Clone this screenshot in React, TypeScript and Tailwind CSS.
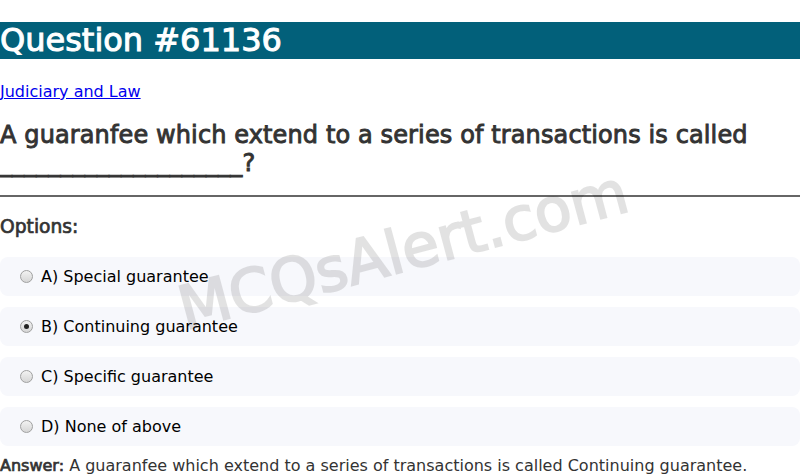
import { useState } from "react";

const options = [
  { key: "A", text: "Special guarantee" },
  { key: "B", text: "Continuing guarantee" },
  { key: "C", text: "Specific guarantee" },
  { key: "D", text: "None of above" },
];

export default function App() {
  const [picked, setPicked] = useState("B");

  return (
    <div className="relative min-h-[476px] overflow-hidden bg-white font-['DejaVu_Sans',sans-serif] text-[#333]">
      <div className="pt-[22px]">
        <h1 className="bg-[#02607a] text-[32px] font-normal leading-[37px] text-white [-webkit-text-stroke:1px_white]">
          Question #61136
        </h1>
      </div>

      <div className="mt-[23px] leading-[19px]">
        <a href="#" className="text-[16px] text-[#0000ee] underline">
          Judiciary and Law
        </a>
      </div>

      <h2 className="mt-[20px] text-[24px] font-normal leading-[28px] tracking-[0.12px] text-[#333] [-webkit-text-stroke:0.9px_#333]">
        A guaranfee which extend to a series of transactions is called ____________________?
      </h2>

      <hr className="mt-[18px] border-t-2 border-[#666]" />

      <h3 className="mt-[19px] text-[18.7px] font-normal leading-[22px] text-[#333] [-webkit-text-stroke:0.7px_#333]">
        Options:
      </h3>

      <div className="mt-[19px] flex flex-col gap-[11px]">
        {options.map((o) => {
          const on = picked === o.key;
          return (
            <label
              key={o.key}
              onClick={() => setPicked(o.key)}
              className="flex h-[39px] cursor-pointer items-center gap-[8px] rounded-lg bg-[#f7f8fc] pl-[20px] text-[16px] text-black"
            >
              <span className="flex h-[13px] w-[13px] items-center justify-center rounded-full border border-[#a0a0a0] bg-gradient-to-b from-[#f2f2f2] to-[#d6d6d6]">
                {on && <span className="h-[5px] w-[5px] rounded-full bg-[#222]" />}
              </span>
              <span>
                {o.key}) {o.text}
              </span>
            </label>
          );
        })}
      </div>

      <p className="mt-[10px] text-[16px] leading-[19px] text-[#333]">
        <span className="[-webkit-text-stroke:0.7px_#333]">Answer:</span> A guaranfee which extend
        to a series of transactions is called Continuing guarantee.
      </p>

      <div className="pointer-events-none absolute left-[403px] top-[250px] -translate-x-1/2 -translate-y-1/2 -rotate-[15deg] whitespace-nowrap text-[60px] text-black opacity-[0.11] [-webkit-text-stroke:2px_black]">
        MCQsAlert.com
      </div>
    </div>
  );
}
